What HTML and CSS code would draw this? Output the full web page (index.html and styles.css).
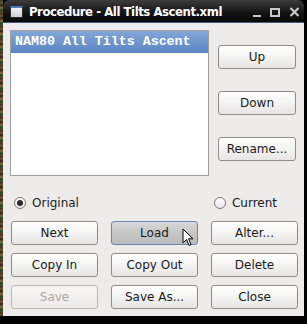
FILE: index.html
```
<!DOCTYPE html>
<html lang="en">
<head>
    <meta charset="UTF-8">
    <title>Procedure - All Tilts Ascent.xml</title>
    <link rel="stylesheet" href="styles.css">
</head>
<body>
    <div class="screen">
        <div class="desk-strip"></div>
        <div class="window">
            <div class="titlebar">
                <span class="win-icon"></span>
                <span class="win-title">Procedure - All Tilts Ascent.xml</span>
                <div class="win-controls">
                    <span class="ctl-min"></span>
                    <span class="ctl-max"></span>
                    <svg class="ctl-close" width="11" height="10" viewBox="0 0 11 10">
                        <path d="M1.5 1 L9.5 9 M9.5 1 L1.5 9" stroke="#c9c9c9" stroke-width="2.2"/>
                    </svg>
                </div>
            </div>
            <div class="content">
                <div class="top-row">
                    <ul class="proc-list">
                        <li class="selected">NAM80 All Tilts Ascent</li>
                    </ul>
                    <div class="side-buttons">
                        <button class="btn">Up</button>
                        <button class="btn">Down</button>
                        <button class="btn">Rename...</button>
                    </div>
                </div>
                <div class="radio-row">
                    <label class="radio checked"><span class="dot"></span>Original</label>
                    <label class="radio"><span class="dot"></span>Current</label>
                </div>
                <div class="button-grid">
                    <button class="btn">Next</button>
                    <button class="btn hover">Load</button>
                    <button class="btn">Alter...</button>
                    <button class="btn">Copy In</button>
                    <button class="btn">Copy Out</button>
                    <button class="btn">Delete</button>
                    <button class="btn" disabled>Save</button>
                    <button class="btn">Save As...</button>
                    <button class="btn">Close</button>
                </div>
                <!-- mouse pointer over Load -->
                <svg class="cursor" width="12" height="19" viewBox="0 0 12 19">
                    <path d="M1 1 L1 15 L4.5 11.5 L7 17.5 L9 16.6 L6.6 10.8 L11 10.8 Z" fill="#fff" stroke="#000" stroke-width="1" stroke-linejoin="round"/>
                </svg>
            </div>
        </div>
    </div>
</body>
</html>
```

FILE: styles.css
```
* {
    margin: 0;
    padding: 0;
    box-sizing: border-box;
}

body {
    width: 307px;
    height: 324px;
    overflow: hidden;
    background: #000;
    font-family: 'DejaVu Sans', 'Liberation Sans', sans-serif;
    font-size: 12px;
    color: #1a1a1a;
}

.screen {
    display: flex;
}

/* bit of desktop visible on the left */
.desk-strip {
    width: 3px;
    height: 316px;
    background: repeating-linear-gradient(180deg, #3b2e1c 0, #6e5532 3px, #2a2114 5px, #8a6a3a 8px, #1f4a22 10px, #5a4428 13px);
}

.window {
    width: 301px;
}

/* Title bar */
.titlebar {
    height: 23px;
    display: flex;
    align-items: center;
    padding-left: 7px;
    background: linear-gradient(#3c3c3c, #121212 60%, #0a0a0a);
    border-radius: 6px 6px 0 0;
    border-bottom: 1px solid #3d5a86;
    color: #fff;
}

.win-icon {
    flex-shrink: 0;
    width: 13px;
    height: 12px;
    border: 1px solid #2a2a2a;
    border-top: 2px solid #4f79c0;
    background: linear-gradient(#f4f4f4, #c9ced6);
    margin-top: 2px;
}

.win-title {
    margin-left: 6px;
    font-family: 'DejaVu Sans Condensed', 'DejaVu Sans', sans-serif;
    font-stretch: condensed;
    font-weight: bold;
    font-size: 13px;
    letter-spacing: -0.45px;
    white-space: nowrap;
}

.win-controls {
    flex-shrink: 0;
    margin-left: auto;
    display: flex;
    align-items: center;
    gap: 9px;
    padding-right: 4px;
    padding-top: 2px;
}

.ctl-min {
    width: 8px;
    height: 2px;
    background: #c9c9c9;
    margin-top: 8px;
}

.ctl-max {
    width: 10px;
    height: 9px;
    border: 2px solid #c9c9c9;
}

/* Dialog body */
.content {
    position: relative;
    height: 293px;
    background: #edeceb;
    padding: 7px 7px 0 7px;
}

.top-row {
    display: flex;
    gap: 9px;
}

.proc-list {
    list-style: none;
    width: 199px;
    height: 146px;
    background: #fff;
    border: 1px solid #a19f9c;
}

.proc-list li {
    height: 22px;
    padding-left: 4px;
    line-height: 22px;
    font-family: 'Liberation Mono', 'Courier New', monospace;
    font-weight: bold;
    font-size: 13.3px;
}

.proc-list li.selected {
    background: linear-gradient(#82a6d8, #5b86c2);
    color: #fff;
}

.side-buttons {
    display: flex;
    flex-direction: column;
    gap: 22px;
    padding-top: 15px;
}

.side-buttons .btn {
    width: 78px;
}

.btn {
    height: 24px;
    font-family: 'DejaVu Sans', 'Liberation Sans', sans-serif;
    font-size: 12px;
    color: #1a1a1a;
    background: linear-gradient(#ffffff, #f3f3f2 50%, #e6e5e4);
    border: 1px solid #8f8d8a;
    border-radius: 3px;
}

.btn.hover {
    background: linear-gradient(#d9d9d9, #c6c6c6 50%, #bcbcbc);
    border-color: #6d86ad;
}

.btn:disabled {
    color: #a9a8a6;
    border-color: #b9b7b4;
    background: linear-gradient(#f6f6f5, #ecebea);
}

/* Radio buttons */
.radio-row {
    display: flex;
    justify-content: space-between;
    height: 20px;
    margin-top: 17px;
    padding-left: 4px;
    padding-right: 20px;
}

.radio {
    display: flex;
    align-items: center;
    gap: 6px;
    font-size: 12px;
}

.dot {
    width: 12px;
    height: 12px;
    border: 1px solid #7d7b78;
    border-radius: 50%;
    background: linear-gradient(#ffffff, #e8e8e8);
    display: flex;
    align-items: center;
    justify-content: center;
}

.radio.checked .dot::after {
    content: '';
    width: 6px;
    height: 6px;
    border-radius: 50%;
    background: #2b2b2b;
}

.button-grid {
    display: grid;
    grid-template-columns: repeat(3, 87px);
    column-gap: 13px;
    row-gap: 8px;
    margin-top: 8px;
    padding-left: 1px;
}

.cursor {
    position: absolute;
    left: 179px;
    top: 205px;
}
```
